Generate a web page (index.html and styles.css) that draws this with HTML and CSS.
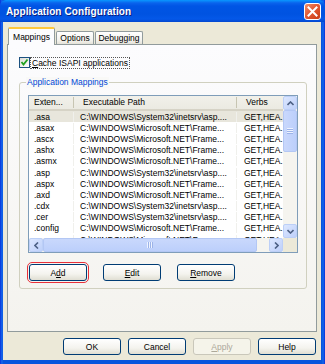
FILE: index.html
```html
<!DOCTYPE html>
<html lang="en">
<head>
    <meta charset="UTF-8">
    <title>Application Configuration</title>
    <link rel="stylesheet" href="styles.css">
</head>
<body>
    <div class="window">
        <div class="titlebar">
            <span class="title">Application Configuration</span>
            <button class="close-btn">
                <svg width="11" height="11" viewBox="0 0 11 11"><path d="M1.5 1.5 L9.5 9.5 M9.5 1.5 L1.5 9.5" stroke="#fff" stroke-width="2" stroke-linecap="square"/></svg>
            </button>
        </div>

        <div class="client">
            <div class="tabs">
                <div class="tab active">Mappings</div>
                <div class="tab tab-options">Options</div>
                <div class="tab tab-debug">Debugging</div>
            </div>

            <div class="panel">
                <label class="check-row">
                    <span class="checkbox">
                        <svg width="9" height="9" viewBox="0 0 9 9"><path d="M1.5 4 L3.5 6.5 L7.5 1.5" fill="none" stroke="#21a121" stroke-width="1.8"/></svg>
                    </span>
                    <span class="check-label"><u>C</u>ache ISAPI applications</span>
                </label>

                <div class="groupbox">
                    <span class="group-title">Application Mappings</span>

                    <div class="listview">
                        <div class="lv-main">
                            <div class="lv-body">
                                <div class="lv-head">
                                    <span class="c1">Exten...</span>
                                    <span class="c2">Executable Path</span>
                                    <span class="c3">Verbs</span>
                                </div>
                                <div class="lv-rows">
                                    <div class="row selected"><span class="c1">.asa</span><span class="c2">C:\WINDOWS\System32\inetsrv\asp....</span><span class="c3">GET,HEA.</span></div>
                                    <div class="row"><span class="c1">.asax</span><span class="c2">C:\WINDOWS\Microsoft.NET\Frame...</span><span class="c3">GET,HEA.</span></div>
                                    <div class="row"><span class="c1">.ascx</span><span class="c2">C:\WINDOWS\Microsoft.NET\Frame...</span><span class="c3">GET,HEA.</span></div>
                                    <div class="row"><span class="c1">.ashx</span><span class="c2">C:\WINDOWS\Microsoft.NET\Frame...</span><span class="c3">GET,HEA.</span></div>
                                    <div class="row"><span class="c1">.asmx</span><span class="c2">C:\WINDOWS\Microsoft.NET\Frame...</span><span class="c3">GET,HEA.</span></div>
                                    <div class="row"><span class="c1">.asp</span><span class="c2">C:\WINDOWS\System32\inetsrv\asp....</span><span class="c3">GET,HEA.</span></div>
                                    <div class="row"><span class="c1">.aspx</span><span class="c2">C:\WINDOWS\Microsoft.NET\Frame...</span><span class="c3">GET,HEA.</span></div>
                                    <div class="row"><span class="c1">.axd</span><span class="c2">C:\WINDOWS\Microsoft.NET\Frame...</span><span class="c3">GET,HEA.</span></div>
                                    <div class="row"><span class="c1">.cdx</span><span class="c2">C:\WINDOWS\System32\inetsrv\asp....</span><span class="c3">GET,HEA.</span></div>
                                    <div class="row"><span class="c1">.cer</span><span class="c2">C:\WINDOWS\System32\inetsrv\asp....</span><span class="c3">GET,HEA.</span></div>
                                    <div class="row"><span class="c1">.config</span><span class="c2">C:\WINDOWS\Microsoft.NET\Frame...</span><span class="c3">GET,HEA.</span></div>
                                    <div class="row"><span class="c1">.cs</span><span class="c2">C:\WINDOWS\Microsoft.NET\Frame...</span><span class="c3">GET,HEA.</span></div>
                                </div>
                            </div>
                            <div class="vscroll">
                                <div class="sb-btn">
                                    <svg width="7" height="5" viewBox="0 0 7 5"><path d="M0.5 4 L3.5 1 L6.5 4" fill="none" stroke="#4d6185" stroke-width="1.6"/></svg>
                                </div>
                                <div class="sb-thumb v-thumb"><span class="grip-v"></span></div>
                                <div class="sb-track"></div>
                                <div class="sb-btn">
                                    <svg width="7" height="5" viewBox="0 0 7 5"><path d="M0.5 1 L3.5 4 L6.5 1" fill="none" stroke="#4d6185" stroke-width="1.6"/></svg>
                                </div>
                            </div>
                        </div>
                        <div class="hscroll">
                            <div class="sb-btn">
                                <svg width="5" height="7" viewBox="0 0 5 7"><path d="M4 0.5 L1 3.5 L4 6.5" fill="none" stroke="#4d6185" stroke-width="1.6"/></svg>
                            </div>
                            <div class="sb-thumb h-thumb"><span class="grip-h"></span></div>
                            <div class="sb-track"></div>
                            <div class="sb-btn">
                                <svg width="5" height="7" viewBox="0 0 5 7"><path d="M1 0.5 L4 3.5 L1 6.5" fill="none" stroke="#4d6185" stroke-width="1.6"/></svg>
                            </div>
                            <div class="sb-corner"></div>
                        </div>
                    </div>

                    <div class="group-actions">
                        <button class="btn btn-focus">A<u>d</u>d</button>
                        <button class="btn"><u>E</u>dit</button>
                        <button class="btn"><u>R</u>emove</button>
                    </div>
                </div>
            </div>

            <div class="dialog-actions">
                <button class="btn">OK</button>
                <button class="btn">Cancel</button>
                <button class="btn" disabled><u>A</u>pply</button>
                <button class="btn">Help</button>
            </div>
        </div>
    </div>
</body>
</html>
```

FILE: styles.css
```css
body {
    margin: 0;
    font-family: 'Liberation Sans', Arial, sans-serif;
    font-size: 8.5px;
    color: #000;
}

.window {
    width: 325px;
    height: 364px;
    display: flex;
    flex-direction: column;
    background: linear-gradient(to right, #0831d9 0, #166aee 2px, #0855dd 3px, #0855dd 322px, #166aee 323px, #0831d9 100%);
}

/* Title bar */
.titlebar {
    height: 22px;
    display: flex;
    align-items: center;
    justify-content: space-between;
    padding: 0 4px 0 6px;
    box-sizing: border-box;
    background: linear-gradient(to bottom, #0997ff 0, #0a63ec 3px, #0055e5 6px, #0053e1 14px, #0458e8 19px, #0447cf 22px);
    border-radius: 6px 6px 0 0;
}

.title {
    color: #fff;
    font-weight: bold;
    font-size: 10px;
    letter-spacing: 0.1px;
    text-shadow: 1px 1px 0 #0a1e80;
}

.close-btn {
    width: 17px;
    height: 17px;
    padding: 0;
    border: 1px solid #fff;
    border-radius: 3px;
    background: linear-gradient(135deg, #f0906a 0, #e35a34 45%, #c83c14 100%);
    display: flex;
    align-items: center;
    justify-content: center;
}

.client {
    flex: 1;
    margin: 0 4px 4px 3px;
    padding: 5px 4px 0 4px;
    background-color: #ece9d8;
    display: flex;
    flex-direction: column;
}

/* Tabs */
.tabs {
    display: flex;
    align-items: flex-end;
    gap: 1px;
    padding-left: 1px;
    height: 17px;
    position: relative;
    z-index: 1;
}

.tab {
    height: 13px;
    box-sizing: border-box;
    padding-top: 1px;
    text-align: center;
    border: 1px solid #919b9c;
    border-bottom: none;
    border-radius: 2px 2px 0 0;
    background: linear-gradient(to bottom, #ffffff, #f3f2ed 70%, #e4e2d8);
}

.tab.active {
    width: 47px;
    height: 18px;
    margin-bottom: -1px;
    padding-top: 3px;
    border-top: 2px solid #ffc83c;
    background: #fcfcfe;
}

.tab-options {
    width: 38px;
}

.tab-debug {
    width: 48px;
}

.panel {
    height: 288px;
    box-sizing: border-box;
    border: 1px solid #919b9c;
    background: linear-gradient(to bottom, #fcfcfe, #f4f3ee);
    padding: 12px 9px 0 11px;
}

.check-row {
    display: flex;
    align-items: center;
    gap: 1px;
    height: 11px;
}

.checkbox {
    width: 11px;
    height: 11px;
    box-sizing: border-box;
    border: 1px solid #1c5180;
    background: linear-gradient(135deg, #dcdcd7, #ffffff);
    display: flex;
    align-items: center;
    justify-content: center;
}

.check-label {
    padding: 0 1px;
    outline: 1px dotted #555;
    line-height: 10px;
}

/* Group box */
.groupbox {
    margin-top: 14px;
    width: 288px;
    height: 207px;
    box-sizing: border-box;
    border: 1px solid #d0d0bf;
    border-radius: 3px;
    padding: 0 8px 0 8px;
}

.group-title {
    display: inline-block;
    margin: -6px 0 0 -2px;
    padding: 0 1px;
    color: #0046d5;
    background: #f9f9f7;
    line-height: 11px;
    vertical-align: top;
}

.listview {
    margin-top: 2px;
    width: 270px;
    height: 158px;
    box-sizing: border-box;
    border: 1px solid #7f9db9;
    background: #fff;
    display: flex;
    flex-direction: column;
}

.lv-main {
    flex: 1;
    display: flex;
    min-height: 0;
}

.lv-body {
    flex: 1;
    overflow: hidden;
}

.lv-head {
    height: 15px;
    box-sizing: border-box;
    display: flex;
    align-items: center;
    background: linear-gradient(to bottom, #f2f1ea, #ebeae2);
    border-bottom: 2px solid #d6d3c6;
}

.lv-head span {
    height: 11px;
    line-height: 11px;
    border-right: 1px solid #c7c5b2;
}

.lv-head .c3 {
    border-right: none;
}

.c1 {
    width: 45px;
    padding-left: 5px;
    box-sizing: border-box;
    flex-shrink: 0;
}

.c2 {
    width: 163px;
    padding-left: 6px;
    box-sizing: border-box;
    flex-shrink: 0;
    white-space: nowrap;
}

.c3 {
    padding-left: 7px;
    white-space: nowrap;
}

.lv-head .c2 {
    padding-left: 9px;
}

.lv-head .c3 {
    padding-left: 9px;
}

.row {
    height: 11.2px;
    display: flex;
    align-items: center;
}

.row .c2,
.row .c1 {
    border-right: 1px solid #f0f0ec;
}

.row.selected {
    background: #e8e6dc;
}

/* Scrollbars */
.vscroll {
    width: 14px;
    display: flex;
    flex-direction: column;
    background: #f5f4ef;
}

.hscroll {
    height: 14px;
    display: flex;
    background: #f5f4ef;
}

.sb-btn {
    width: 14px;
    height: 14px;
    box-sizing: border-box;
    flex-shrink: 0;
    border: 1px solid #bccff7;
    border-radius: 2px;
    background: linear-gradient(135deg, #dce7ff, #bed0fa);
    display: flex;
    align-items: center;
    justify-content: center;
}

.sb-thumb {
    box-sizing: border-box;
    border: 1px solid #b3c7f4;
    border-radius: 2px;
    background: linear-gradient(to right, #c9d8fc, #bccffb);
    display: flex;
    align-items: center;
    justify-content: center;
}

.v-thumb {
    height: 42px;
}

.h-thumb {
    width: 214px;
    background: linear-gradient(to bottom, #c9d8fc, #bccffb);
}

.sb-track {
    flex: 1;
}

.grip-v {
    width: 6px;
    height: 6px;
    background: repeating-linear-gradient(to bottom, #eef3ff 0, #eef3ff 1px, #9cb3e8 1px, #9cb3e8 2px);
}

.grip-h {
    width: 6px;
    height: 6px;
    background: repeating-linear-gradient(to right, #eef3ff 0, #eef3ff 1px, #9cb3e8 1px, #9cb3e8 2px);
}

.sb-corner {
    width: 14px;
    background: #ece9d8;
}

/* Buttons */
.btn {
    width: 58px;
    height: 17px;
    padding: 0;
    font-family: inherit;
    font-size: 8.5px;
    color: #000;
    border: 1px solid #003c74;
    border-radius: 3px;
    background: linear-gradient(to bottom, #ffffff, #f4f3ee 60%, #e0ded3);
}

.btn:disabled {
    color: #aca899;
    border-color: #c9c7ba;
    background: #f5f4ea;
}

.group-actions {
    display: flex;
    gap: 16px;
    margin-top: 11px;
    padding-left: 1px;
}

.btn-focus {
    outline: 1px solid #e8303a;
    outline-offset: 1px;
}

.dialog-actions {
    display: flex;
    justify-content: flex-end;
    gap: 7px;
    margin-top: 6px;
    padding-right: 1px;
}
```
